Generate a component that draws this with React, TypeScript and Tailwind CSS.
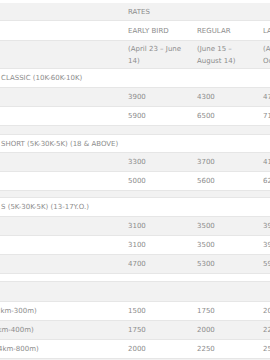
const ROW = 'grid grid-cols-[120px_69px_66px_66px] border-b border-[#e6e6e6]';

type Rate = { label?: string; shift?: string; early: string; regular: string; late: string };

const GROUPS: { title: string; head: number; gap: number; rows: Rate[] }[] = [
  { title: 'CLASSIC (10K-60K-10K)', head: 19, gap: 9, rows: [
    { early: '3900', regular: '4300', late: '4700' },
    { early: '5900', regular: '6500', late: '7100' },
  ] },
  { title: 'SHORT (5K-30K-5K) (18 & ABOVE)', head: 18, gap: 7, rows: [
    { early: '3300', regular: '3700', late: '4100' },
    { early: '5000', regular: '5600', late: '6200' },
  ] },
  { title: 'S (5K-30K-5K) (13-17Y.O.)', head: 19, gap: 8, rows: [
    { early: '3100', regular: '3500', late: '3900' },
    { early: '3100', regular: '3500', late: '3900' },
    { early: '4700', regular: '5300', late: '5900' },
  ] },
  { title: '', head: 20, gap: 0, rows: [
    { label: '2km-300m)', shift: '-ml-[4px]', early: '1500', regular: '1750', late: '2000' },
    { label: '3km-400m)', shift: '-ml-[7px]', early: '1750', regular: '2000', late: '2250' },
    { label: '4km-800m)', shift: '-ml-[2px]', early: '2000', regular: '2250', late: '2500' },
    { early: '', regular: '', late: '' },
  ] },
];

export default function App() {
  let n = 0;
  const stripe = () => (n++ % 2 === 0 ? 'bg-[#f2f2f2]' : 'bg-white');
  return (
    <div className="h-[360px] w-[270px] overflow-hidden bg-white pt-[3px] font-['DejaVu_Sans',sans-serif] text-[7px] leading-[12px] text-[#8c8c8c]">
      <div className="w-[321px]">
        <div className={`${ROW} ${stripe()} h-[18px] items-center`}>
          <div />
          <div className="col-span-3 pl-2">RATES</div>
        </div>
        <div className={`${ROW} ${stripe()} h-[20px] items-center`}>
          <div />
          <div className="pl-2">EARLY BIRD</div>
          <div className="pl-2">REGULAR</div>
          <div className="pl-2">LATE</div>
        </div>
        <div className={`${ROW} ${stripe()} h-[28px] items-center`}>
          <div />
          <div className="pl-2 pr-1">(April 23 – June 14)</div>
          <div className="pl-2 pr-3">(June 15 – August 14)</div>
          <div className="pl-2 pr-3">(August 15 – October 1)</div>
        </div>
        {GROUPS.map((g, gi) => (
          <div key={gi}>
            <div className={`${ROW} ${stripe()} items-center`} style={{ height: g.head }}>
              <div className="col-span-4 whitespace-nowrap pl-[1px]">{g.title}</div>
            </div>
            {g.rows.map((r, i) => (
              <div key={i} className={`${ROW} ${stripe()} h-[19px] items-center`}>
                <div className="overflow-hidden whitespace-nowrap">
                  {r.label && <span className={`inline-block ${r.shift}`}>{r.label}</span>}
                </div>
                <div className="pl-2">{r.early}</div>
                <div className="pl-2">{r.regular}</div>
                <div className="pl-2">{r.late}</div>
              </div>
            ))}
            {g.gap > 0 && <div className={`${stripe()} border-b border-[#e6e6e6]`} style={{ height: g.gap }} />}
          </div>
        ))}
      </div>
    </div>
  );
}
